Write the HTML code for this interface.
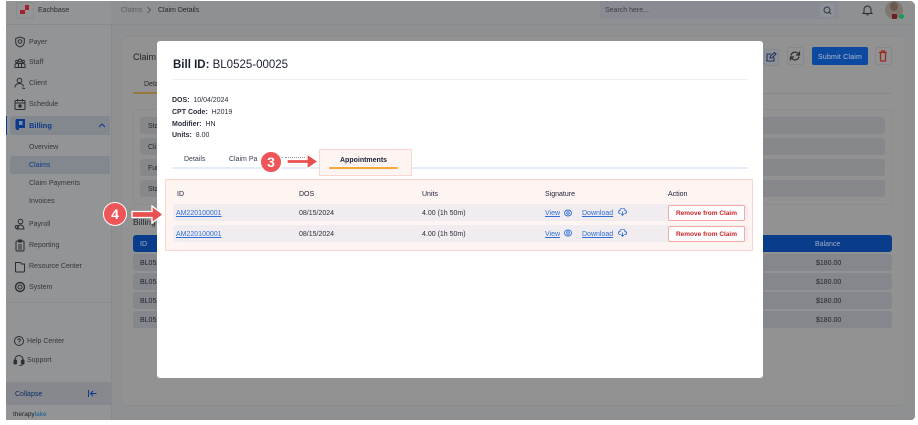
<!DOCTYPE html>
<html><head><meta charset="utf-8"><style>
html,body{margin:0;padding:0;background:#fff}
#r{position:relative;width:918px;height:425px;overflow:hidden;background:#fff;font-family:"Liberation Sans",sans-serif;color:#262b3a;filter:blur(.25px)}
#r div,#r span.a,#r svg{position:absolute}
.t{position:absolute;white-space:nowrap;line-height:12px;margin-top:1px}
.side{font-size:7px;color:#33373f}
.st{position:absolute;background:#86888b;border-radius:3px}
.row{position:absolute;background:#84878b;border-radius:3px;left:133px;width:759px;height:17px}
.m{font-size:7px;color:#2a2e3b}
.lnk{color:#2f6fd6;text-decoration:underline;font-size:7px}
.rm{position:absolute;left:668px;width:75px;height:14px;border:1px solid #f7a9a4;border-radius:2px;background:#fff;color:#c8242a;font-size:6.5px;font-weight:bold;text-align:center;line-height:15px}
.ic{fill:none;stroke:#2b2e33;stroke-width:1}
</style></head><body><div id="r">
<div style="left:6px;top:1px;width:909px;height:419px;background:#8f9091;border-radius:0 5px 4px 0;overflow:hidden">
</div>
<div style="left:6px;top:1px;width:105px;height:419px;background:#929496;border-right:1px solid #888a8c"></div>
<div style="left:111px;top:1px;width:804px;height:23px;background:#8f9091;border-bottom:1px solid #8a8b8c;border-radius:0 5px 0 0"></div>
<div style="left:6px;top:24px;width:105px;height:1px;background:#888a8c"></div>

<div style="left:16px;top:2px;width:16px;height:15px;border:1px solid #8a8c8e;border-radius:2px"></div>
<div style="left:20px;top:10px;width:5px;height:4px;background:#a3202c"></div>
<div style="left:25px;top:5px;width:4px;height:5px;background:#a3202c"></div>
<span class="t" style="left:38px;top:4px;font-size:7px;color:#2b2e35">Eachbase</span>

<svg style="left:14px;top:36px" width="12" height="12" viewBox="0 0 12 12" class="ic"><path d="M6 1l4.300 1.500v3.500c0 2.800-2 4.300-4.300 5-2.300-.7-4.300-2.200-4.300-5V2.500z"/><circle cx="6" cy="5.500" r="1.800"/></svg>
<span class="t side" style="left:29px;top:36px">Payer</span>
<svg style="left:14px;top:57px" width="12" height="12" viewBox="0 0 12 12" class="ic"><circle cx="6" cy="3.500" r="1.500"/><circle cx="2.800" cy="4.500" r="1.200"/><circle cx="9.200" cy="4.500" r="1.200"/><path d="M1 10.500V8q0-1.500 2-1.500h6q2 0 2 1.500v2.500zM4.500 6.500v4M7.500 6.500v4"/></svg>
<span class="t side" style="left:29px;top:56px">Staff</span>
<svg style="left:14px;top:77px" width="12" height="13" viewBox="0 0 12 13" class="ic"><circle cx="5.500" cy="3.500" r="2.300"/><path d="M1 10.500c0-3 2-4 4.500-4s3.500 1 4 3M8 11l3 .5"/></svg>
<span class="t side" style="left:29px;top:77px">Client</span>
<svg style="left:14px;top:98px" width="12" height="13" viewBox="0 0 12 13" class="ic"><rect x="1" y="2.500" width="10" height="9" rx="1"/><path d="M3.500 1v2.500M8.500 1v2.500M1 5h10"/><circle cx="6" cy="8" r="1.200" fill="#2b2e33"/></svg>
<span class="t side" style="left:29px;top:98px">Schedule</span>

<div style="left:10px;top:116px;width:100px;height:19px;background:#83878e;border-radius:3px 0 0 3px"></div>
<div style="left:6px;top:116px;width:1px;height:19px;background:#0d3a8c"></div>
<svg style="left:14px;top:118px" width="12" height="13" viewBox="0 0 12 13"><path d="M3 1h8v9H5v2H4q-2.500 0-2.500-2V3q0-2 1.500-2z" fill="#0d3a8c"/><rect x="5" y="3" width="3.500" height="4" fill="#7d8aa6"/></svg>
<span class="t" style="left:29px;top:119px;font-size:7.500px;font-weight:bold;color:#0d3a8c">Billing</span>
<svg style="left:98px;top:122px" width="8" height="6" viewBox="0 0 8 6" fill="none" stroke="#0d3a8c" stroke-width="1.100"><path d="M1 5l3-3 3 3"/></svg>
<span class="t" style="left:29px;top:141px;font-size:7px;color:#33373f">Overview</span>
<div style="left:10px;top:156px;width:100px;height:18px;background:#83878e;border-radius:3px 0 0 3px"></div>
<span class="t" style="left:29px;top:159px;font-size:7px;color:#0d3a8c">Claims</span>
<span class="t" style="left:29px;top:177px;font-size:7px;color:#33373f">Claim Payments</span>
<span class="t" style="left:29px;top:195px;font-size:7px;color:#33373f">Invoices</span>

<svg style="left:14px;top:218px" width="12" height="13" viewBox="0 0 12 13" class="ic"><circle cx="6.500" cy="3.500" r="2.300"/><path d="M3 11c.3-2.500 1.500-4 3.500-4s3.200 1.500 3.500 4z"/><circle cx="2.800" cy="9" r="1.500"/></svg>
<span class="t side" style="left:29px;top:218px">Payroll</span>
<svg style="left:14px;top:239px" width="12" height="13" viewBox="0 0 12 13" class="ic"><rect x="2" y="2" width="8" height="10" rx="1"/><path d="M4.500 1h3v2h-3zM4 6h4M4 8h4M4 10h4"/></svg>
<span class="t side" style="left:29px;top:239px">Reporting</span>
<svg style="left:14px;top:260px" width="12" height="13" viewBox="0 0 12 13" class="ic"><path d="M1.500 2.500h5l1 1.500h3v7q0 1-1 1h-7q-1 0-1-1z"/></svg>
<span class="t side" style="left:29px;top:260px">Resource Center</span>
<svg style="left:14px;top:281px" width="12" height="12" viewBox="0 0 12 12" class="ic"><circle cx="6" cy="6" r="2"/><circle cx="6" cy="6" r="4.500" stroke-width="1.400"/></svg>
<span class="t side" style="left:29px;top:281px">System</span>
<div style="left:6px;top:302px;width:105px;height:1px;background:#8a8c8e"></div>

<svg style="left:13px;top:335px" width="12" height="13" viewBox="0 0 12 13" class="ic"><circle cx="6" cy="6" r="4.500"/><path d="M4.700 5q.3-1.300 1.500-1.200 1.300.2 1.200 1.300c-.1 1-1.400 1-1.400 2M6 8.500v.6"/></svg>
<span class="t side" style="left:27px;top:335px">Help Center</span>
<svg style="left:13px;top:354px" width="12" height="13" viewBox="0 0 12 13" class="ic"><path d="M2 7V5.500a4 4 0 0 1 8 0V7"/><rect x="1" y="6" width="2.500" height="4" rx="1" fill="#2b2e33"/><rect x="8.500" y="6" width="2.500" height="4" rx="1" fill="#2b2e33"/><path d="M9.500 10q0 1.500-3 1.500"/></svg>
<span class="t side" style="left:27px;top:354px">Support</span>

<div style="left:6px;top:382px;width:105px;height:23px;background:#86888d"></div>
<span class="t" style="left:15px;top:388px;font-size:7px;color:#0e2f66">Collapse</span>
<svg style="left:87px;top:388px" width="11" height="11" viewBox="0 0 11 11" fill="none" stroke="#0d3a8c" stroke-width="1"><path d="M1.500 2v7M9.500 5.500H3.500M6 3L3.500 5.500 6 8"/></svg>
<span class="t" style="left:13px;top:408px;font-size:6.500px;color:#1c1f26">therapy<span style="color:#0d5a9c">lake</span></span>

<span class="t" style="left:121px;top:4px;font-size:7px;color:#5d6066">Claims</span>
<svg style="left:146px;top:6px" width="6" height="8" viewBox="0 0 6 8" fill="none" stroke="#55585e"><path d="M1.500 1l3 3-3 3"/></svg>
<span class="t" style="left:158px;top:4px;font-size:7px;color:#25282f">Claim Details</span>

<div style="left:600px;top:1px;width:239px;height:18px;background:#888b92;border-radius:0 0 3px 3px"></div>
<span class="t" style="left:605px;top:4px;font-size:7px;color:#3d4047">Search here...</span>
<div style="left:820px;top:3px;width:14px;height:14px;background:#8e939b;border-radius:3px"></div>
<svg style="left:823px;top:6px" width="9" height="9" viewBox="0 0 9 9" fill="none" stroke="#33363c"><circle cx="4" cy="4" r="3"/><path d="M6.200 6.200L8 8"/></svg>
<svg style="left:862px;top:4px" width="11" height="12" viewBox="0 0 11 12" fill="none" stroke="#2b2e33"><path d="M2 8.500V5.500a3.500 3.500 0 0 1 7 0v3l1 1H1zM4.500 10.500q1 1 2 0"/></svg>
<div style="left:885px;top:1px;width:18px;height:18px;border-radius:50%;background:#7f7770;overflow:hidden"><div style="left:5px;top:1px;width:8px;height:9px;border-radius:50%;background:#6a5a4e"></div><div style="left:7px;top:13px;width:5px;height:5px;background:#6b1e1e"></div></div>
<div style="left:899px;top:14px;width:5px;height:5px;border-radius:50%;background:#1d9b58"></div>

<div style="left:121px;top:36px;width:783px;height:368px;background:#929292;border:1px solid #8b8c8d;border-radius:5px"></div>
<span class="t" style="left:133px;top:50px;font-size:9px;color:#1d2027">Claim</span>
<span class="t" style="left:144px;top:78px;font-size:7px;color:#23262c">Details</span>
<div style="left:133px;top:93px;width:759px;height:1px;background:#85888f"></div>
<div style="left:133px;top:92px;width:30px;height:2px;background:#96793d"></div>
<div style="left:133px;top:109px;width:758px;height:94px;border:1px solid #8b8c8d;border-radius:5px"></div>
<div class="st" style="left:140px;top:117px;width:745px;height:17px"></div>
<div class="st" style="left:140px;top:138px;width:745px;height:17px"></div>
<div class="st" style="left:140px;top:159px;width:745px;height:17px"></div>
<div class="st" style="left:140px;top:180px;width:745px;height:17px"></div>
<span class="t" style="left:148px;top:120px;font-size:7px;color:#22252b">Sta</span>
<span class="t" style="left:148px;top:141px;font-size:7px;color:#22252b">Cli</span>
<span class="t" style="left:148px;top:162px;font-size:7px;color:#22252b">Fur</span>
<span class="t" style="left:148px;top:183px;font-size:7px;color:#22252b">Sta</span>

<span class="t" style="left:133px;top:215px;font-size:8.500px;color:#1d2027">Billing</span>
<div style="left:133px;top:235px;width:759px;height:17px;background:#0a3c8c;border-radius:3px"></div>
<span class="t" style="left:140px;top:238px;font-size:7px;color:#a4aec4">ID</span>
<span class="t" style="left:815px;top:238px;font-size:7px;color:#a4aec4">Balance</span>
<div class="row" style="top:254px"></div><div class="row" style="top:273px"></div><div class="row" style="top:292px"></div><div class="row" style="top:311px"></div>
<span class="t" style="left:140px;top:257px;font-size:7px;color:#22252b">BL052</span>
<span class="t" style="left:140px;top:276px;font-size:7px;color:#22252b">BL052</span>
<span class="t" style="left:140px;top:295px;font-size:7px;color:#22252b">BL052</span>
<span class="t" style="left:140px;top:314px;font-size:7px;color:#22252b">BL052</span>
<span class="t" style="left:816px;top:257px;font-size:7px;color:#22252b">$180.00</span>
<span class="t" style="left:816px;top:276px;font-size:7px;color:#22252b">$180.00</span>
<span class="t" style="left:816px;top:295px;font-size:7px;color:#22252b">$180.00</span>
<span class="t" style="left:816px;top:314px;font-size:7px;color:#22252b">$180.00</span>

<div style="left:764px;top:49px;width:13px;height:15px;background:#8e9298;border:1px solid #85888c;border-radius:2px"></div>
<svg style="left:765px;top:51px" width="12" height="12" viewBox="0 0 12 12" fill="none" stroke="#20345c" stroke-width="1.100"><path d="M9 6.500V10H2V3h4M5 7l.5-2L9.500 1.500 11 3 7 7z"/></svg>
<div style="left:787px;top:47px;width:15px;height:16px;border:1px solid #85888c;border-radius:3px"></div>
<svg style="left:789px;top:50px" width="12" height="12" viewBox="0 0 12 12" fill="none" stroke="#2a2d31" stroke-width="1.200"><path d="M2 5.500a4 4 0 0 1 7-2L10.500 5M10 6.500a4 4 0 0 1-7 2L1.500 7M10.500 1.500V5H7M1.500 10.500V7H5"/></svg>
<div style="left:812px;top:47px;width:56px;height:18px;background:#0b4aa0;border-radius:2px"></div>
<span class="t" style="left:818px;top:51px;font-size:7px;color:#b2bccf;letter-spacing:.2px">Submit Claim</span>
<div style="left:875px;top:47px;width:15px;height:16px;border:1px solid #85888c;border-radius:3px"></div>
<svg style="left:878px;top:50px" width="10" height="12" viewBox="0 0 10 12" fill="none" stroke="#9c2a22" stroke-width="1.300"><path d="M1 2.500h8M2.500 2.500V11h5V2.500M3.500 2.500V1h3v1.500"/></svg>

<div style="left:157px;top:41px;width:606px;height:337px;background:#fff;border-radius:3px"></div>
<span class="t" style="left:173px;top:57px;font-size:11.500px;line-height:15px;color:#1d2233"><b>Bill ID:</b> BL0525-00025</span>
<div style="left:172px;top:79px;width:576px;height:1px;background:#eceef1"></div>
<span class="t m" style="left:172px;top:94px"><b>DOS:</b>&nbsp; 10/04/2024</span>
<span class="t m" style="left:172px;top:106px"><b>CPT Code:</b>&nbsp; H2019</span>
<span class="t m" style="left:172px;top:118px"><b>Modifier:</b>&nbsp; HN</span>
<span class="t m" style="left:172px;top:129px"><b>Units:</b>&nbsp; 8.00</span>
<span class="t m" style="left:184px;top:153px;color:#3a3e4b">Details</span>
<span class="t m" style="left:229px;top:153px;color:#3a3e4b">Claim Pa</span>
<span class="t m" style="left:281px;top:153px;color:#3a3e4b">r</span>
<div style="left:285px;top:157px;width:26px;height:0;border-top:1px dotted #8d909a"></div>
<div style="left:172px;top:167px;width:576px;height:2px;background:#e4ecf6"></div>

<div style="left:319px;top:149px;width:91px;height:25px;background:#fef4f2;border:1px solid #fbd6cf"></div>
<span class="t" style="left:340px;top:154px;font-size:7px;font-weight:bold;color:#20243a">Appointments</span>
<div style="left:329px;top:167px;width:69px;height:2px;background:#f9a83a;border-radius:1px"></div>

<div style="left:165px;top:179px;width:586px;height:70px;background:#fef4f2;border:1px solid #fbd6cf"></div>
<span class="t m" style="left:177px;top:188px;color:#20243a">ID</span>
<span class="t m" style="left:299px;top:188px;color:#20243a">DOS</span>
<span class="t m" style="left:422px;top:188px;color:#20243a">Units</span>
<span class="t m" style="left:545px;top:188px;color:#20243a">Signature</span>
<span class="t m" style="left:668px;top:188px;color:#20243a">Action</span>
<div style="left:173px;top:204px;width:575px;height:17px;background:#f1ecef;border-radius:4px"></div>
<div style="left:173px;top:225px;width:575px;height:17px;background:#f1ecef;border-radius:4px"></div>

<span class="t lnk" style="left:176px;top:207px">AM220100001</span>
<span class="t m" style="left:299px;top:207px">08/15/2024</span>
<span class="t m" style="left:422px;top:207px">4.00 (1h 50m)</span>
<span class="t lnk" style="left:545px;top:228px">View</span>
<span class="t lnk" style="left:545px;top:207px">View</span>
<svg style="left:564px;top:209px" width="8" height="8" viewBox="0 0 8 8" fill="none" stroke="#2f6fd6" stroke-width=".9"><ellipse cx="4" cy="4" rx="3.500" ry="3"/><circle cx="4" cy="4" r="1.300"/></svg>
<span class="t lnk" style="left:582px;top:207px">Download</span>
<svg style="left:618px;top:208px" width="9" height="8" viewBox="0 0 9 8" fill="none" stroke="#2f6fd6" stroke-width=".9"><path d="M2.500 5.500H2A1.500 1.500 0 0 1 2 2.500 2.500 2.500 0 0 1 7 2.500 1.500 1.500 0 0 1 7 5.500H6.500M4.500 3.500v4M3.200 6l1.300 1.300L5.800 6"/></svg>
<div class="rm" style="top:205px">Remove from Claim</div>

<span class="t lnk" style="left:176px;top:228px">AM220100001</span>
<span class="t m" style="left:299px;top:228px">08/15/2024</span>
<span class="t m" style="left:422px;top:228px">4.00 (1h 50m)</span>
<svg style="left:564px;top:229px" width="8" height="8" viewBox="0 0 8 8" fill="none" stroke="#2f6fd6" stroke-width=".9"><ellipse cx="4" cy="4" rx="3.500" ry="3"/><circle cx="4" cy="4" r="1.300"/></svg>
<span class="t lnk" style="left:582px;top:228px">Download</span>
<svg style="left:618px;top:229px" width="9" height="8" viewBox="0 0 9 8" fill="none" stroke="#2f6fd6" stroke-width=".9"><path d="M2.500 5.500H2A1.500 1.500 0 0 1 2 2.500 2.500 2.500 0 0 1 7 2.500 1.500 1.500 0 0 1 7 5.500H6.500M4.500 3.500v4M3.200 6l1.300 1.300L5.800 6"/></svg>
<div class="rm" style="top:226px">Remove from Claim</div>

<div style="left:259px;top:150px;width:20px;height:20px;border-radius:50%;background:#ee5558;border:2px solid #fff;color:#fff;font-size:14px;font-weight:bold;text-align:center;line-height:20px">3</div>
<svg style="left:285px;top:150px" width="36" height="22" viewBox="0 0 36 22"><path d="M2 9.500h20V4l11 7.500-11 7.500v-5.500H2z" fill="#e9504f" stroke="#fff" stroke-width="1.300"/></svg>
<div style="left:103px;top:202px;width:22px;height:22px;border-radius:50%;background:#ee5558;border:1.500px solid #fff;color:#fff;font-size:14px;font-weight:bold;text-align:center;line-height:22px">4</div>
<svg style="left:130px;top:203px" width="36" height="22" viewBox="0 0 36 22"><path d="M2 8.500h20V3l11 8.500-11 8.500v-5.500H2z" fill="#e9504f" stroke="#fff" stroke-width="1.300"/></svg>
</div></body></html>
